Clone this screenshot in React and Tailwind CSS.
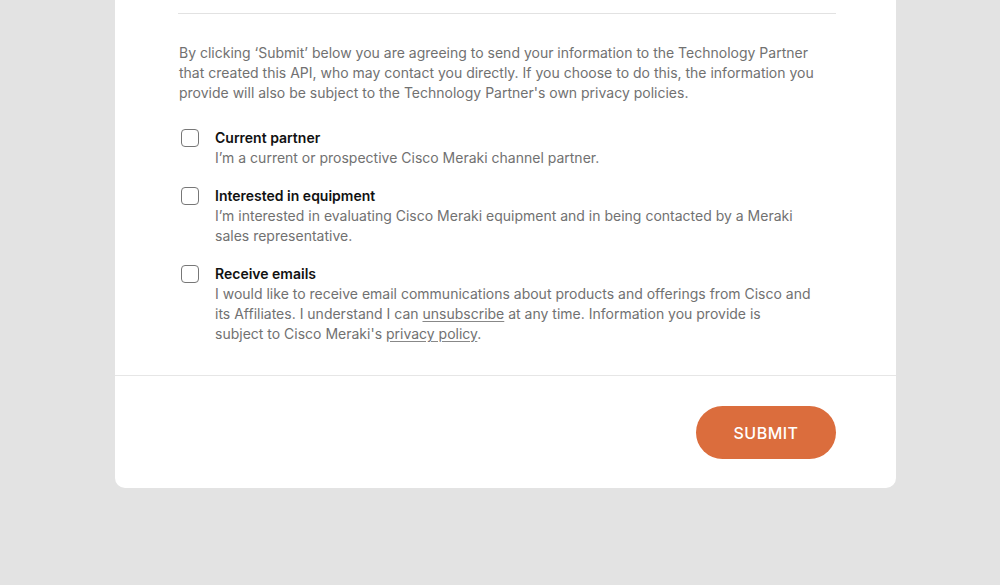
export default function App() {
  const items = [
    {
      title: "Current partner",
      body: <>I’m a current or prospective Cisco Meraki channel partner.</>,
    },
    {
      title: "Interested in equipment",
      body: <>I’m interested in evaluating Cisco Meraki equipment and in being contacted by a Meraki sales representative.</>,
    },
    {
      title: "Receive emails",
      body: (
        <>
          I would like to receive email communications about products and offerings from Cisco and its Affiliates. I understand I can{" "}
          <a href="#" className="underline underline-offset-2 decoration-[#888]">unsubscribe</a> at any time. Information you provide is subject to Cisco
          Meraki's <a href="#" className="underline underline-offset-2 decoration-[#888]">privacy policy</a>.
        </>
      ),
    },
  ];

  return (
    <div className="min-h-[585px] bg-[#e3e3e3] font-['Inter',sans-serif]">
      <div className="ml-[115px] w-[781px] bg-white rounded-b-[10px]">
        <div className="pt-[13px] pl-[63px] pr-[60px] pb-[31px]">
          <div className="border-t border-[#e2e2e2]" />
          <p className="mt-[29px] text-[14px] leading-[20px] text-[#717171] pl-px">
            By clicking ‘Submit’ below you are agreeing to send your information to the Technology Partner that created this API, who may contact you directly. If you choose to do this, the information you provide will also be subject to the Technology Partner's own privacy policies.
          </p>
          <div className="mt-[25px] flex flex-col gap-[18px]">
            {items.map((it) => (
              <label key={it.title} className="flex gap-4 cursor-pointer">
                <input type="checkbox" className="appearance-none mt-px ml-[3px] w-[18px] h-[18px] shrink-0 rounded-[4px] border-[1.5px] border-[#777] bg-white" />
                <div className="text-[14px] leading-[20px] pr-6">
                  <div className="font-semibold text-[#111]">{it.title}</div>
                  <div className="text-[#717171]">{it.body}</div>
                </div>
              </label>
            ))}
          </div>
        </div>
        <div className="border-t border-[#e6e6e6] flex justify-end pr-[60px] pt-[30px] pb-[29px]">
          <button className="w-[140px] h-[53px] rounded-full bg-[#db6d3d] text-white text-[16px] font-medium tracking-[0.03em]">
            SUBMIT
          </button>
        </div>
      </div>
    </div>
  );
}
